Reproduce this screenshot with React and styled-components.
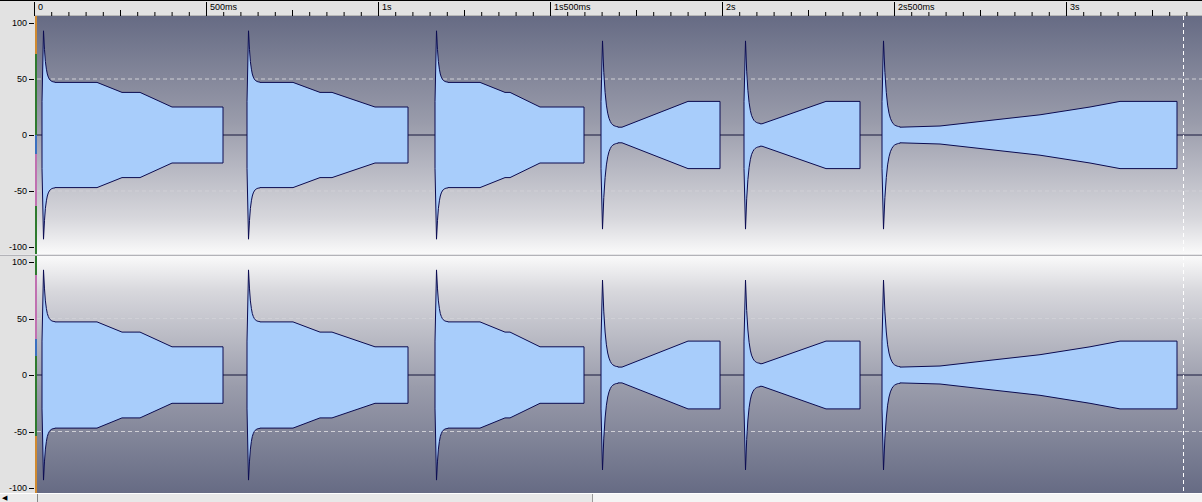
import React from "react";
import styled, { createGlobalStyle } from "styled-components";

const Global = createGlobalStyle`
  html,body{margin:0;padding:0;background:#e2e2e2;overflow:hidden;}
  *{box-sizing:border-box;}
`;

const Page = styled.div`
  width:1202px;height:502px;display:grid;
  grid-template-columns:35px 2px 1fr;
  grid-template-rows:16px 238px 2px 237px 1fr;
  font-family:"Liberation Sans",Arial,sans-serif;
`;
const Corner = styled.div`background:#e2e2e2;border-top:1px solid #000;`;
const Ruler = styled.div`
  grid-column:2 / 4;position:relative;background:#e2e2e2;border-top:1px solid #000;
  border-bottom:1px solid #b8b8b8;
`;
const RulerLabel = styled.span`
  position:absolute;top:1px;font-size:9px;color:#000;padding-left:3px;
  border-left:1px solid #000;height:14px;line-height:11px;
`;
const Scale = styled.div`position:relative;background:#e2e2e2;`;
const ScaleLabel = styled.span`
  position:absolute;right:8px;font-size:9px;color:#000;transform:translateY(-50%);
  &::after{content:"";position:absolute;left:calc(100% + 2px);top:50%;width:5px;height:1px;background:#000;}
`;
const ColorBar = styled.div`background:${p => p.$bg};`;
const Channel = styled.div`
  position:relative;overflow:hidden;
  background:linear-gradient(${p => p.$flip ? "to top" : "to bottom"}, #666b84 0%, #9a9cab 45%, #d7d7dc 85%, #fafafa 100%);
`;
const Divider = styled.div`grid-column:1 / 4;background:linear-gradient(#fff,#9a9aa0);`;
const Scroll = styled.div`
  grid-column:1 / 4;background:#ececec;border-top:1px solid #fff;display:flex;align-items:center;
`;
const ScrollArrow = styled.div`width:38px;height:100%;border-right:1px solid #888;font-size:7px;padding-left:2px;`;
const ScrollTrack = styled.div`flex:1;height:100%;background:#f4f4f4;`;
const ScrollThumb = styled.div`width:555px;height:100%;background:#e8e8e8;border-right:1px solid #999;`;

const X0 = 37;
const notes = [
  { s: 42, e: 223, peak: 93, env: [[55, 47], [97, 47], [122, 38], [140, 38], [172, 25], [223, 25]] },
  { s: 247, e: 408, peak: 93, env: [[260, 47], [293, 47], [320, 38], [332, 38], [375, 25], [408, 25]] },
  { s: 435, e: 584, peak: 93, env: [[448, 47], [480, 47], [505, 38], [510, 38], [540, 25], [584, 25]] },
  { s: 601, e: 720, peak: 84, env: [[618, 7], [622, 7], [688, 30], [720, 30]] },
  { s: 744, e: 860, peak: 84, env: [[760, 10], [762, 10], [826, 30], [860, 30]] },
  { s: 882, e: 1177, peak: 84, env: [[900, 7], [940, 8], [990, 13], [1040, 18], [1090, 25], [1120, 30], [1177, 30]] },
];

function notePath(n, cy, k) {
  const base = n.env[0][1];
  const top = [];
  top.push([n.s, 0], [n.s, 30], [n.s + 1.5, n.peak]);
  const span = n.env[0][0] - (n.s + 1.5);
  for (let i = 1; i <= 12; i++) {
    const x = n.s + 1.5 + (span * i) / 12;
    const a = base + (n.peak - base) * Math.exp(-i / 2.2);
    top.push([x, a]);
  }
  n.env.forEach(p => top.push(p));
  top.push([n.e, 0]);
  const pts = [...top, ...top.slice(1, -1).reverse().map(([x, a]) => [x, -a]), [n.s, 0]];
  return "M" + pts.map(([x, a]) => `${(x - X0).toFixed(1)},${(cy - a * k).toFixed(1)}`).join(" L");
}

function Wave({ cy, k, h }) {
  return (
    <svg width="1165" height={h} style={{ position: "absolute", left: 0, top: 0 }}>
      <line x1="0" x2="1165" y1={cy - 50 * k} y2={cy - 50 * k} stroke="#d0d0d6" strokeDasharray="4 3" />
      <line x1="0" x2="1165" y1={cy + 50 * k} y2={cy + 50 * k} stroke="#d0d0d6" strokeDasharray="4 3" />
      <line x1="0" x2="1165" y1={cy} y2={cy} stroke="#16163c" />
      {notes.map((n, i) => (
        <path key={i} d={notePath(n, cy, k)} fill="#a8cdfb" stroke="#0b0b50" strokeWidth="1" strokeLinejoin="round" />
      ))}
      <line x1={1183 - X0 + 0.5} x2={1183 - X0 + 0.5} y1="0" y2={h} stroke="#fff" strokeDasharray="4 3" />
    </svg>
  );
}

const labels = ["0", "500ms", "1s", "1s500ms", "2s", "2s500ms", "3s"];

function RulerTicks() {
  const ticks = [];
  for (let i = 0; i < 70; i++) {
    const x = i * 17.2 + 0.5;
    if (i % 10 === 0) continue;
    ticks.push(<line key={i} x1={x} x2={x} y1={i % 5 === 0 ? 9 : 11} y2="15" stroke="#000" />);
  }
  return <svg width="1165" height="15" style={{ position: "absolute", left: -1, top: 0 }}>{ticks}</svg>;
}

function ScaleCol({ cy, k }) {
  return (
    <Scale>
      {[100, 50, 0, -50, -100].map(v => (
        <ScaleLabel key={v} style={{ top: cy - v * k }}>{v}</ScaleLabel>
      ))}
    </Scale>
  );
}

export default function App() {
  return (
    <>
      <Global />
      <Page>
        <Corner />
        <Ruler>
          <RulerTicks />
          {labels.map((l, i) => (
            <RulerLabel key={l} style={{ left: i * 172 - 1 }}>{l}</RulerLabel>
          ))}
        </Ruler>
        <ScaleCol cy={119} k={1.12} />
        <ColorBar $bg="linear-gradient(#d08a30 0 16%, #2e7a2e 16% 50%, #3a70c0 50% 58%, #c070b0 58% 80%, #2e7a2e 80%)" />
        <Channel><Wave cy={119} k={1.12} h={238} /></Channel>
        <Divider />
        <ScaleCol cy={119} k={1.13} />
        <ColorBar $bg="linear-gradient(#2e7a2e 0 8%, #c070b0 8% 35%, #3a70c0 35% 42%, #2e7a2e 42% 76%, #d08a30 76%)" />
        <Channel $flip><Wave cy={119} k={1.13} h={237} /></Channel>
        <Scroll>
          <ScrollArrow>◀</ScrollArrow>
          <ScrollThumb />
          <ScrollTrack />
        </Scroll>
      </Page>
    </>
  );
}
